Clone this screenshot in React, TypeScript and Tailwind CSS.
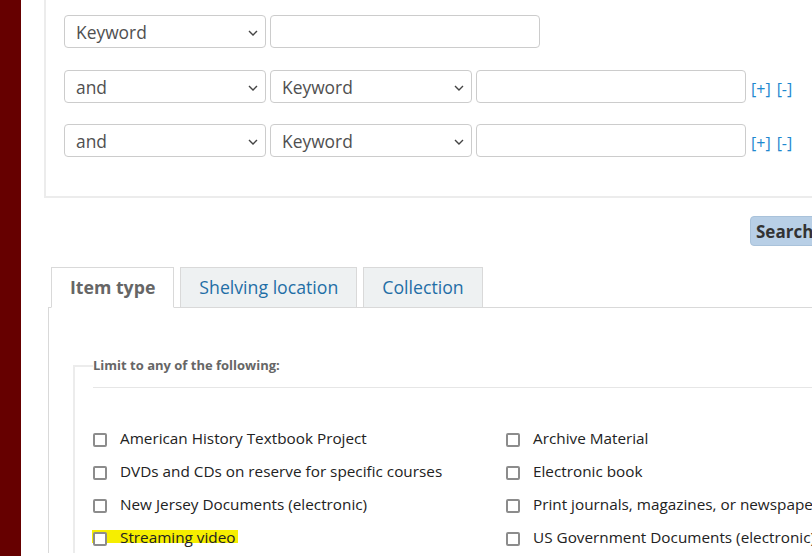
import React from "react";

const FONT = { fontFamily: '"Open Sans", "Noto Sans", sans-serif' };

function Chevron() {
  return (
    <svg width="10" height="6" viewBox="0 0 10 6" className="shrink-0">
      <path d="M1 1 L5 5 L9 1" fill="none" stroke="#444" strokeWidth="1.4" />
    </svg>
  );
}

function FakeSelect({ label }: { label: string }) {
  return (
    <div className="flex h-[33px] w-[202px] items-center justify-between rounded-[4px] border border-[#cccccc] bg-white pl-[11px] pr-[7px] pt-[2px] text-[17.4px] text-[#505050]">
      <span>{label}</span>
      <Chevron />
    </div>
  );
}

function TextInput() {
  return <div className="h-[33px] w-[270px] rounded-[4px] border border-[#cccccc] bg-white" />;
}

function PlusMinus() {
  return (
    <div className="ml-[1px] flex items-center gap-[6px] pt-[4px] text-[16px] text-[#1e88cf]">
      <span>[+]</span>
      <span>[-]</span>
    </div>
  );
}

const leftCol = [
  "American History Textbook Project",
  "DVDs and CDs on reserve for specific courses",
  "New Jersey Documents (electronic)",
  "Streaming video",
];
const rightCol = [
  "Archive Material",
  "Electronic book",
  "Print journals, magazines, or newspapers",
  "US Government Documents (electronic)",
];

function Box() {
  return <span className="mt-[5px] inline-block h-[14px] w-[14px] shrink-0 rounded-[2px] border-2 border-[#8c8c8c] bg-white" />;
}

function CheckItem({ label, marked }: { label: string; marked?: boolean }) {
  if (marked) {
    return (
      <div className="flex h-[33px] items-center">
        <span className="-ml-[1px] flex h-[13px] items-center bg-[#f6ee00] pl-[1px] pr-[2px]">
          <Box />
          <span className="ml-[13px] whitespace-nowrap text-[15.3px] leading-[22px] text-[#222]">{label}</span>
        </span>
      </div>
    );
  }
  return (
    <div className="flex h-[33px] items-center">
      <Box />
      <span className="ml-[13px] whitespace-nowrap text-[15.3px] leading-[22px] text-[#222]">{label}</span>
    </div>
  );
}

export default function App() {
  const tabs = ["Item type", "Shelving location", "Collection"];
  return (
    <div className="flex h-[556px] w-[812px] overflow-hidden bg-white" style={FONT}>
      <div className="w-[21px] shrink-0 bg-[#660000]" />

      <div className="w-[900px] shrink-0">
        {/* search rows */}
        <div className="ml-[23px] border-b-2 border-l-2 border-[#ececec] pb-[39px] pl-[18px] pt-[15px]">
          <div className="flex gap-[4px]">
            <FakeSelect label="Keyword" />
            <TextInput />
          </div>
          <div className="mt-[22px] flex gap-[4px]">
            <FakeSelect label="and" />
            <FakeSelect label="Keyword" />
            <TextInput />
            <PlusMinus />
          </div>
          <div className="mt-[21px] flex gap-[4px]">
            <FakeSelect label="and" />
            <FakeSelect label="Keyword" />
            <TextInput />
            <PlusMinus />
          </div>
        </div>

        <div className="mt-[18px] pl-[729px]">
          <button className="h-[30px] rounded-[4px] border border-[#a9c2da] bg-[#b8cfe6] px-[5px] pt-[1px] text-[17px] font-bold text-[#333]">
            Search
          </button>
        </div>

        {/* limits */}
        <div className="ml-[27px] mt-[21px]">
          <div className="flex gap-[6px] border-b border-[#d9d9d9] pl-[3px]">
            {tabs.map((t, i) => (
              <div
                key={t}
                className={
                  i === 0
                    ? "-mb-[1px] border border-b-white border-[#d9d9d9] bg-white px-[18px] pb-[8px] pt-[8px] text-[17.7px] font-bold leading-[23px] text-[#666]"
                    : "-mb-[1px] border border-[#d9d9d9] bg-[#eef1f2] px-[18px] pb-[8px] pt-[8px] text-[17.7px] leading-[23px] text-[#1f6ea6]"
                }
              >
                {t}
              </div>
            ))}
          </div>

          <div className="border-l border-[#d9d9d9] pt-[47px]">
            <div className="ml-[24px]">
              <div className="flex">
                <div className="mt-[10px] w-[20px] shrink-0 border-l-2 border-t-2 border-[#ececec]" />
                <div className="h-[33px] flex-1 border-b border-[#e6e6e6] text-[13px] font-bold leading-[20px] text-[#666]">
                  Limit to any of the following:
                </div>
              </div>
              <div className="border-l-2 border-[#ececec] pl-[18px] pt-[33px]">
                <div className="grid grid-cols-[413px_413px]">
                  <div>
                    {leftCol.map((l, i) => (
                      <CheckItem key={l} label={l} marked={i === 3} />
                    ))}
                  </div>
                  <div>
                    {rightCol.map((l) => (
                      <CheckItem key={l} label={l} />
                    ))}
                  </div>
                </div>
              </div>
            </div>
          </div>
        </div>
      </div>
    </div>
  );
}
